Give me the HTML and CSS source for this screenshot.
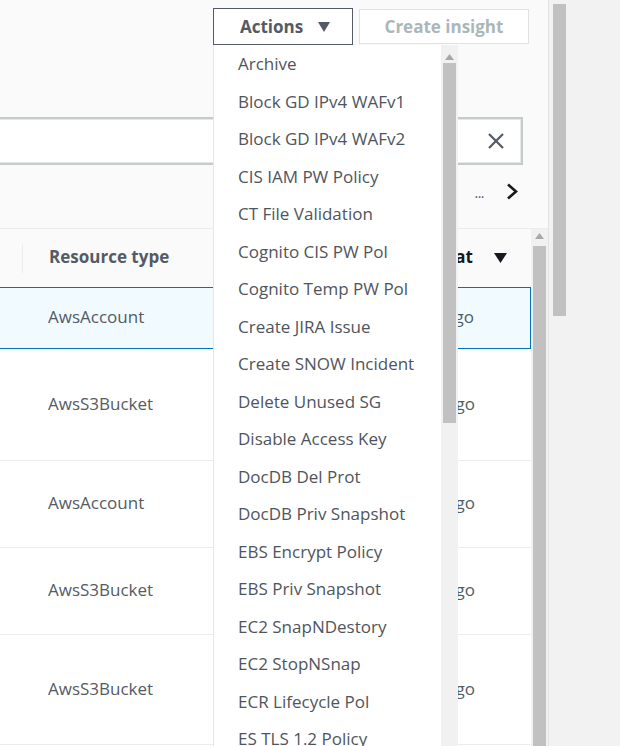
FILE: index.html
```html
<!DOCTYPE html>
<html lang="en">
<head>
<meta charset="utf-8">
<title>Findings</title>
<link rel="stylesheet" href="styles.css">
</head>
<body>
<div class="app">
  <div class="main">
    <div class="topbar">
      <button class="btn btn-actions">Actions
        <svg class="caret" width="12" height="10" viewBox="0 0 12 10"><path d="M0 0 H12 L6 10 Z" fill="#545b64"/></svg>
      </button>
      <button class="btn btn-insight">Create insight</button>
    </div>
    <div class="search">
      <div class="search-box">
        <svg class="clear" width="16" height="16" viewBox="0 0 16 16"><path d="M1 1 L15 15 M15 1 L1 15" stroke="#545b64" stroke-width="2.2" fill="none"/></svg>
      </div>
    </div>
    <div class="toolbar">
      <span class="dots">...</span>
      <svg class="chev" width="12" height="17" viewBox="0 0 12 17"><path d="M2 1.5 L10 8.5 L2 15.5" stroke="#16191f" stroke-width="2.6" fill="none"/></svg>
    </div>
    <div class="table-wrap">
      <div class="table">
        <div class="row head">
          <div class="c1"><span class="divider"></span></div>
          <div class="c2">Resource type</div>
          <div class="c3"><span class="sorted">Updated at</span>
            <svg width="13" height="10" viewBox="0 0 13 10"><path d="M0 0 H13 L6.5 10 Z" fill="#16191f"/></svg>
          </div>
        </div>
        <div class="row sel">
          <div class="c1"></div>
          <div class="c2">AwsAccount</div>
          <div class="c3">3 days ago</div>
        </div>
        <div class="row r-tall">
          <div class="c1"></div>
          <div class="c2">AwsS3Bucket</div>
          <div class="c3">3 days ago</div>
        </div>
        <div class="row r-mid">
          <div class="c1"></div>
          <div class="c2">AwsAccount</div>
          <div class="c3">3 days ago</div>
        </div>
        <div class="row r-mid">
          <div class="c1"></div>
          <div class="c2">AwsS3Bucket</div>
          <div class="c3">3 days ago</div>
        </div>
        <div class="row r-last">
          <div class="c1"></div>
          <div class="c2">AwsS3Bucket</div>
          <div class="c3">3 days ago</div>
        </div>
      </div>
      <div class="vscroll">
        <svg class="up" width="9" height="6" viewBox="0 0 9 6"><path d="M0 6 L4.5 0 L9 6 Z" fill="#a8a8a8"/></svg>
        <div class="thumb"></div>
      </div>
    </div>

    <div class="dropdown">
      <ul class="menu">
        <li>Archive</li>
        <li>Block GD IPv4 WAFv1</li>
        <li>Block GD IPv4 WAFv2</li>
        <li>CIS IAM PW Policy</li>
        <li>CT File Validation</li>
        <li>Cognito CIS PW Pol</li>
        <li>Cognito Temp PW Pol</li>
        <li>Create JIRA Issue</li>
        <li>Create SNOW Incident</li>
        <li>Delete Unused SG</li>
        <li>Disable Access Key</li>
        <li>DocDB Del Prot</li>
        <li>DocDB Priv Snapshot</li>
        <li>EBS Encrypt Policy</li>
        <li>EBS Priv Snapshot</li>
        <li>EC2 SnapNDestory</li>
        <li>EC2 StopNSnap</li>
        <li>ECR Lifecycle Pol</li>
        <li>ES TLS 1.2 Policy</li>
      </ul>
      <div class="dd-scroll">
        <svg class="up" width="9" height="6" viewBox="0 0 9 6"><path d="M0 6 L4.5 0 L9 6 Z" fill="#a8a8a8"/></svg>
        <div class="dd-thumb"></div>
      </div>
    </div>
  </div>
  <div class="side">
    <div class="side-thumb"></div>
  </div>
</div>
</body>
</html>
```

FILE: styles.css
```css
* { box-sizing: border-box; }
html, body {
  margin: 0;
  padding: 0;
  width: 620px;
  height: 746px;
  overflow: hidden;
  font-family: "Open Sans", "Noto Sans", sans-serif;
  font-size: 17px;
  color: #545b64;
}
.app {
  display: flex;
  height: 746px;
}
.main {
  position: relative;
  width: 549px;
  flex: none;
  background: #fafafa;
  border-right: 1px solid #e4e4e4;
  display: flex;
  flex-direction: column;
  overflow: hidden;
}
.side {
  flex: 1;
  background: #f2f2f2;
  padding: 4px 0 0 4px;
}
.side-thumb {
  width: 13px;
  height: 312px;
  background: #c1c1c1;
}

/* top bar */
.topbar {
  height: 117px;
  flex: none;
  display: flex;
  justify-content: flex-end;
  align-items: flex-start;
  gap: 6px;
  padding: 8px 19px 0 0;
}
.btn {
  font-family: inherit;
  font-size: 17px;
  font-weight: 700;
  background: #fff;
  margin: 0;
  display: flex;
  align-items: center;
}
.btn-actions {
  width: 140px;
  height: 37px;
  border: 1px solid #545b64;
  color: #545b64;
  padding: 0 0 1px 26px;
  gap: 15px;
}
.btn-actions .caret { margin-top: 1px; }
.btn-insight {
  width: 170px;
  height: 35px;
  margin-top: 1px;
  border: 1px solid #dfe2e2;
  color: #aab7b8;
  justify-content: center;
  padding: 0 0 1px;
}

/* search */
.search {
  height: 48px;
  flex: none;
  padding-right: 25px;
}
.search-box {
  margin-left: -4px;
  height: 48px;
  background: #fff;
  border: 2px solid #c5caca;
  box-shadow: inset 0 0 0 1px #e6e9e9;
  display: flex;
  align-items: center;
  justify-content: flex-end;
  padding-right: 17px;
}

/* toolbar */
.toolbar {
  height: 63px;
  flex: none;
  display: flex;
  justify-content: flex-end;
  align-items: flex-start;
  padding: 18px 30px 0 0;
  gap: 22px;
}
.dots {
  font-size: 14px;
  line-height: 17px;
  color: #545b64;
  letter-spacing: -0.5px;
  margin-top: 1px;
}

/* table */
.table-wrap {
  flex: 1;
  display: flex;
  border-top: 1px solid #eaeded;
}
.table {
  width: 531px;
  flex: none;
  background: #fff;
}
.row {
  display: grid;
  grid-template-columns: 23px 1fr 200px;
  align-items: center;
  border-bottom: 1px solid #eaeded;
  padding-bottom: 3px;
}
.row .c2 { padding-left: 25px; }
.row .c3 {
  text-align: right;
  padding-right: 56px;
  white-space: nowrap;
}
.head {
  height: 58px;
  background: #fafafa;
  font-weight: 700;
  border-bottom: none;
}
.head .c1 {
  display: flex;
  justify-content: flex-end;
  margin-top: 3px;
}
.divider {
  width: 1px;
  height: 29px;
  background: #eaeded;
}
.head .c2 { padding-left: 26px; }
.head .c3 {
  display: flex;
  justify-content: flex-end;
  align-items: center;
  gap: 21px;
  padding-right: 24px;
}
.head .c3 svg { margin-top: 3px; }
.sorted { color: #16191f; }
.sel {
  height: 62px;
  background: #f1faff;
  border: 1px solid #0073bb;
  border-left: none;
}
.r-tall { height: 112px; }
.r-mid { height: 87px; }
.r-last { height: 110px; }

.vscroll {
  flex: 1;
  background: #f1f1f1;
  display: flex;
  flex-direction: column;
  align-items: center;
  padding-top: 4px;
}
.vscroll .thumb {
  width: 13px;
  flex: 1;
  margin-top: 7px;
  margin-right: 1px;
  background: #c1c1c1;
}

/* dropdown menu (overlay) */
.dropdown {
  position: absolute;
  left: 213px;
  top: 45px;
  width: 245px;
  height: 720px;
  background: #fff;
  border-left: 1px solid #e6e8e8;
  display: flex;
}
.menu {
  list-style: none;
  margin: 0;
  padding: 0;
  flex: 1;
}
.menu li {
  height: 37.5px;
  line-height: 37px;
  padding-left: 24px;
  color: #4f555d;
  white-space: nowrap;
}
.dd-scroll {
  width: 17px;
  flex: none;
  background: #f1f1f1;
  display: flex;
  flex-direction: column;
  align-items: center;
  padding-top: 9px;
}
.dd-thumb {
  width: 13px;
  height: 360px;
  margin-top: 3px;
  background: #c1c1c1;
}
```
